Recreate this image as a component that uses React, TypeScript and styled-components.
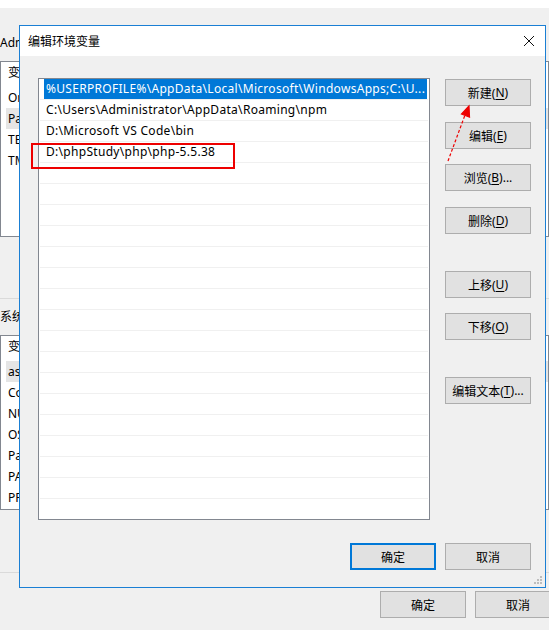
import React from 'react';
import styled, { createGlobalStyle } from 'styled-components';

const GlobalStyle = createGlobalStyle`
    html, body {
        margin: 0;
        padding: 0;
    }
    body {
        background: #f0f0f0;
        font-family: "Noto Sans", "Noto Sans CJK SC", sans-serif;
        font-size: 12px;
        color: #000;
    }
`;

const paths = [
    '%USERPROFILE%\\AppData\\Local\\Microsoft\\WindowsApps;C:\\U...',
    'C:\\Users\\Administrator\\AppData\\Roaming\\npm',
    'D:\\Microsoft VS Code\\bin',
    'D:\\phpStudy\\php\\php-5.5.38',
];

const userVars = ['OneDrive', 'Path', 'TEMP', 'TMP'];
const systemVars = ['asl.log', 'ComSpec', 'NUMBER_OF_PROCESSORS', 'OS', 'Path', 'PATHEXT', 'PROCESSOR_ARCHITECTURE'];

const sideButtons = [
    { label: '新建', key: 'N', mt: 0 },
    { label: '编辑', key: 'E', mt: 16 },
    { label: '浏览', key: 'B', mt: 15, more: true },
    { label: '删除', key: 'D', mt: 16 },
    { label: '上移', key: 'U', mt: 37 },
    { label: '下移', key: 'O', mt: 15 },
    { label: '编辑文本', key: 'T', mt: 37, more: true },
];

const EMPTY_ROWS = 17;

const App = () => {
    return (
        <>
            <GlobalStyle />
            <Desktop>
                <BackWindow>
                    <TopStrip />
                    <GroupLabel $mt={27}>Administrator 的用户变量(U)</GroupLabel>
                    <VarBox $h={176}>
                        <VarHeader>变量</VarHeader>
                        {userVars.map((v) => (
                            <VarRow key={v} $active={v === 'Path'}>{v}</VarRow>
                        ))}
                    </VarBox>
                    <Divider $mt={61} />
                    <GroupLabel $mt={10}>系统变量(S)</GroupLabel>
                    <VarBox $h={175}>
                        <VarHeader>变量</VarHeader>
                        {systemVars.map((v) => (
                            <VarRow key={v} $active={v === 'asl.log'}>{v}</VarRow>
                        ))}
                    </VarBox>
                    <Divider $mt={62} />
                    <BackFooter>
                        <Button>确定</Button>
                        <Button>取消</Button>
                    </BackFooter>
                </BackWindow>

                <Dialog>
                    <TitleBar>
                        <span>编辑环境变量</span>
                        <CloseIcon viewBox="0 0 12 12">
                            <path d="M1 1 L11 11 M11 1 L1 11" />
                        </CloseIcon>
                    </TitleBar>
                    <DialogBody>
                        <PathList>
                            {paths.map((p, i) => (
                                <PathRow key={p}>
                                    <PathCell $selected={i === 0}>{p}</PathCell>
                                </PathRow>
                            ))}
                            {Array.from({ length: EMPTY_ROWS }).map((_, i) => (
                                <PathRow key={'e' + i}>
                                    <PathCell />
                                </PathRow>
                            ))}
                        </PathList>
                        <SideButtons>
                            {sideButtons.map((b) => (
                                <Button key={b.key} $mt={b.mt}>
                                    {b.label}(<u>{b.key}</u>){b.more ? '...' : ''}
                                </Button>
                            ))}
                        </SideButtons>
                    </DialogBody>
                    <DialogFooter>
                        <Button $primary>确定</Button>
                        <Button>取消</Button>
                    </DialogFooter>
                    <Grip viewBox="0 0 8 8">
                        <rect x="6" y="0" width="2" height="2" />
                        <rect x="3" y="3" width="2" height="2" />
                        <rect x="6" y="3" width="2" height="2" />
                        <rect x="0" y="6" width="2" height="2" />
                        <rect x="3" y="6" width="2" height="2" />
                        <rect x="6" y="6" width="2" height="2" />
                    </Grip>
                </Dialog>

                <Highlight />
                <Arrow viewBox="0 0 549 630">
                    <line x1="448" y1="161" x2="465" y2="115" strokeDasharray="3 2" />
                    <polygon points="469,106 461.5,114 469.5,117" />
                </Arrow>
            </Desktop>
        </>
    );
};

export default App;

const dialogBlue = `#1a7fd4`;
const selectBlue = `#0078d7`;
const boxBorder = `#828790`;
const red = `#ee0000`;

const Desktop = styled.div`
    position: relative;
    width: 549px;
    height: 630px;
    overflow: hidden;
    background: #f0f0f0;
`;

const BackWindow = styled.div`
    display: flex;
    flex-direction: column;
    height: 100%;
`;

const TopStrip = styled.div`
    height: 8px;
    background: #fff;
`;

const GroupLabel = styled.div<{ $mt: number }>`
    margin-top: ${(p) => p.$mt}px;
    margin-bottom: 10px;
    line-height: 16px;
    height: 16px;
    white-space: nowrap;
`;

const VarBox = styled.div<{ $h: number }>`
    height: ${(p) => p.$h}px;
    box-sizing: border-box;
    border: 1px solid ${boxBorder};
    background: #fff;
    padding: 0 0 0 5px;
    display: flex;
    flex-direction: column;
`;

const VarHeader = styled.div`
    height: 22px;
    line-height: 22px;
    padding-left: 2px;
    margin-bottom: 3px;
`;

const VarRow = styled.div<{ $active?: boolean }>`
    height: 21px;
    line-height: 21px;
    padding-left: 2px;
    background: ${(p) => (p.$active ? '#e5e5e5' : 'transparent')};
    white-space: nowrap;
`;

const Divider = styled.div<{ $mt: number }>`
    margin-top: ${(p) => p.$mt}px;
    height: 1px;
    background: #dadada;
`;

const BackFooter = styled.div`
    display: flex;
    gap: 9px;
    padding: 18px 0 0 380px;
`;

const Button = styled.div<{ $primary?: boolean; $mt?: number }>`
    width: 86px;
    height: 27px;
    box-sizing: border-box;
    margin-top: ${(p) => p.$mt || 0}px;
    flex: none;
    display: flex;
    align-items: center;
    justify-content: center;
    background: #e1e1e1;
    border: ${(p) => (p.$primary ? `2px solid ${selectBlue}` : '1px solid #adadad')};
    white-space: nowrap;
    u {
        text-decoration-thickness: 1px;
        text-underline-offset: 2px;
    }
`;

const Dialog = styled.div`
    position: absolute;
    left: 19px;
    top: 25px;
    width: 527px;
    height: 563px;
    box-sizing: border-box;
    border: 1px solid ${dialogBlue};
    background: #f0f0f0;
    display: flex;
    flex-direction: column;
`;

const TitleBar = styled.div`
    height: 30px;
    background: #fff;
    display: flex;
    align-items: center;
    justify-content: space-between;
    padding: 0 10px 0 8px;
`;

const CloseIcon = styled.svg`
    width: 12px;
    height: 12px;
    fill: none;
    stroke: #111;
    stroke-width: 1;
`;

const DialogBody = styled.div`
    display: flex;
    padding: 22px 14px 0 18px;
`;

const PathList = styled.div`
    width: 392px;
    height: 442px;
    box-sizing: border-box;
    border: 1px solid ${boxBorder};
    background: #fff;
    padding: 0 1px;
    overflow: hidden;
`;

const PathRow = styled.div`
    height: 21px;
    box-sizing: border-box;
    border-bottom: 1px solid #f0f0f0;
    padding: 0 1px 0 4px;
    display: flex;
`;

const PathCell = styled.div<{ $selected?: boolean }>`
    flex: 1;
    height: 20px;
    line-height: 20px;
    padding-left: 2px;
    letter-spacing: 0.3px;
    white-space: nowrap;
    overflow: hidden;
    color: ${(p) => (p.$selected ? '#fff' : '#000')};
    background: ${(p) => (p.$selected ? selectBlue : 'transparent')};
`;

const SideButtons = styled.div`
    margin-left: 15px;
    padding-top: 1px;
    display: flex;
    flex-direction: column;
`;

const DialogFooter = styled.div`
    display: flex;
    justify-content: flex-end;
    gap: 9px;
    padding: 23px 14px 0 0;
`;

const Grip = styled.svg`
    position: absolute;
    right: 3px;
    bottom: 3px;
    width: 8px;
    height: 8px;
    fill: #bdbdbd;
`;

const Highlight = styled.div`
    position: absolute;
    left: 31px;
    top: 143px;
    width: 204px;
    height: 26px;
    box-sizing: border-box;
    border: 2px solid ${red};
`;

const Arrow = styled.svg`
    position: absolute;
    left: 0;
    top: 0;
    width: 549px;
    height: 630px;
    pointer-events: none;
    stroke: ${red};
    stroke-width: 1.2;
    fill: ${red};
`;
